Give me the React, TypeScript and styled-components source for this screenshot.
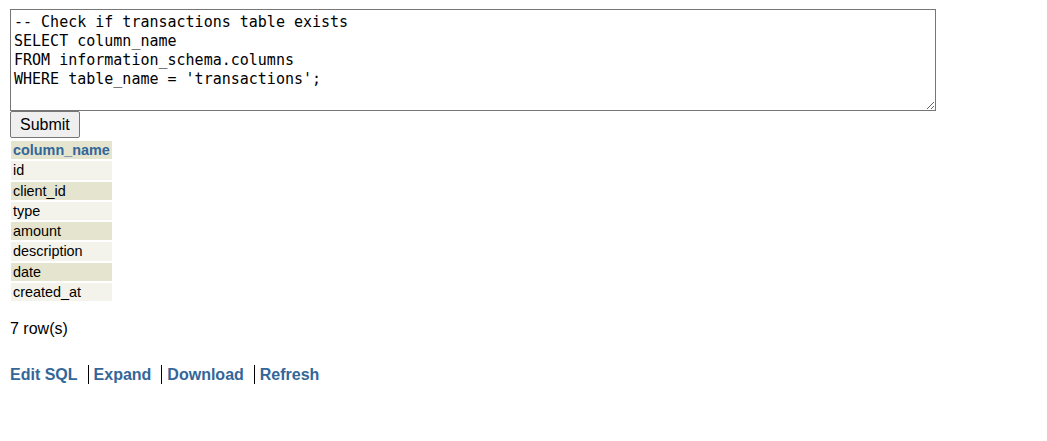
import React from "react";
import styled, { createGlobalStyle } from "styled-components";

const Global = createGlobalStyle`
  html, body { margin: 0; padding: 0; background: #fff; }
  body {
    font-family: "Liberation Sans", Arial, sans-serif;
    font-size: 14px;
    color: #000;
  }
`;

const Page = styled.div`
  padding: 9px 0 0 10px;
  display: flex;
  flex-direction: column;
  align-items: flex-start;
`;

const SqlBox = styled.textarea`
  box-sizing: border-box;
  width: 926px;
  height: 102px;
  margin: 0;
  padding: 3px 3px;
  border: 1px solid #767676;
  border-radius: 0;
  font-family: "DejaVu Sans Mono", "Liberation Mono", monospace;
  font-size: 15px;
  line-height: 19px;
  color: #000;
  resize: both;
  outline: none;
`;

const SubmitButton = styled.button`
  box-sizing: border-box;
  height: 27px;
  padding: 0 9px;
  margin: 0;
  font-family: "Liberation Sans", Arial, sans-serif;
  font-size: 16px;
  color: #000;
  background: #efefef;
  border: 1px solid #767676;
  border-radius: 2px;
`;

const Table = styled.table`
  border-collapse: separate;
  border-spacing: 2px;
  margin: 1px 0 0 -1px;
`;

const HeadCell = styled.th`
  background: #e5e5cf;
  color: #336699;
  font-weight: bold;
  font-size: 14.4px;
  text-align: left;
  padding: 1px 2px;
  height: 16.3px;
  line-height: 16.3px;
`;

const Cell = styled.td<{ $odd: boolean }>`
  background: ${(p) => (p.$odd ? "#e5e5cf" : "#f3f3eb")};
  padding: 1px 2px;
  height: 16.3px;
  line-height: 16.3px;
  font-size: 14.4px;
`;

const RowCount = styled.p`
  margin: 17px 0 0 0;
  font-size: 16px;
  line-height: 18px;
`;

const Links = styled.p`
  margin: 27px 0 0 0;
  display: flex;
  align-items: center;
  font-size: 16px;
  font-weight: bold;
`;

const Link = styled.a`
  color: #336699;
  text-decoration: none;
`;

const Sep = styled.span`
  display: inline-block;
  width: 1px;
  height: 19px;
  background: #000;
  margin: 0 5px 0 10px;
`;

const columns = ["id", "client_id", "type", "amount", "description", "date", "created_at"];

const sql = `-- Check if transactions table exists
SELECT column_name
FROM information_schema.columns
WHERE table_name = 'transactions';`;

export default function App() {
  return (
    <Page>
      <Global />
      <SqlBox defaultValue={sql} spellCheck={false} />
      <SubmitButton>Submit</SubmitButton>
      <Table>
        <thead>
          <tr>
            <HeadCell>column_name</HeadCell>
          </tr>
        </thead>
        <tbody>
          {columns.map((c, i) => (
            <tr key={c}>
              <Cell $odd={i % 2 === 1}>{c}</Cell>
            </tr>
          ))}
        </tbody>
      </Table>
      <RowCount>7 row(s)</RowCount>
      <Links>
        <Link href="#">Edit SQL</Link>
        <Sep />
        <Link href="#">Expand</Link>
        <Sep />
        <Link href="#">Download</Link>
        <Sep />
        <Link href="#">Refresh</Link>
      </Links>
    </Page>
  );
}
